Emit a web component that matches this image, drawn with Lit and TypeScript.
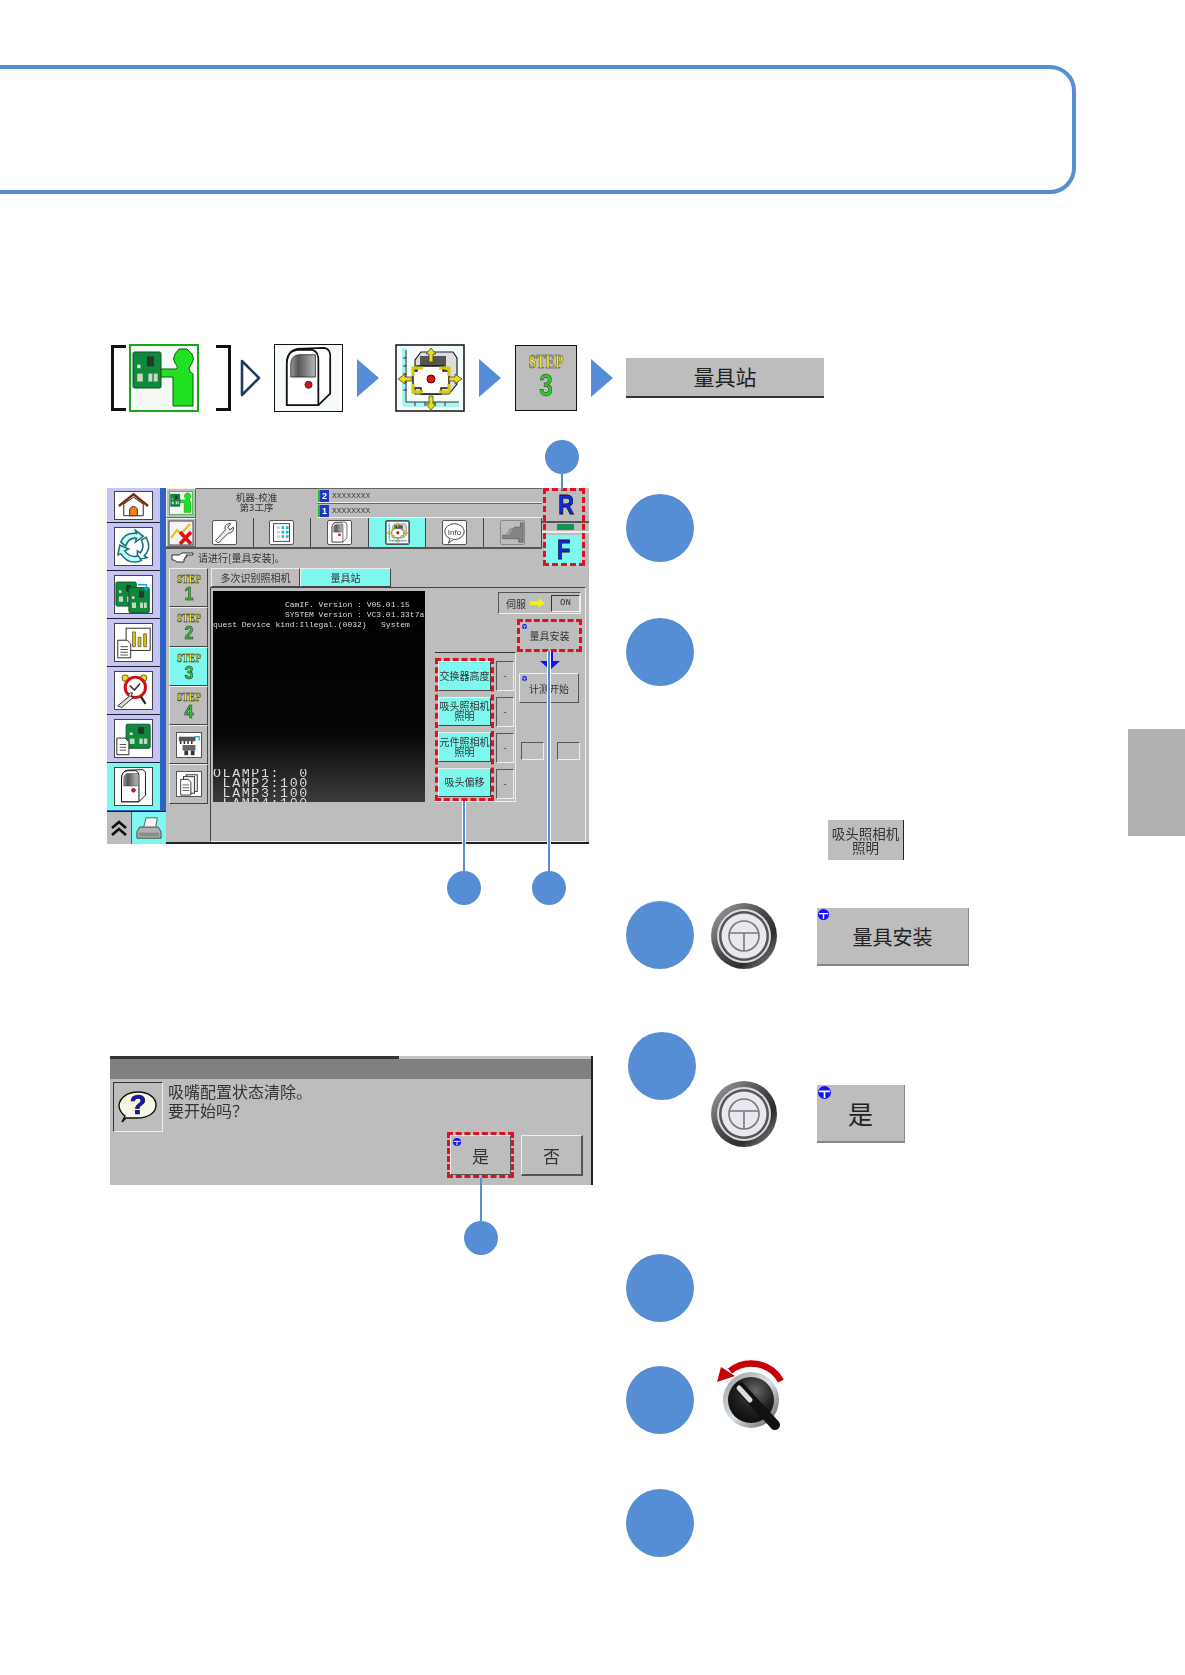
import { LitElement, html, css, svg } from "lit";
import { customElement } from "lit/decorators.js";

const pcb = (x: number, y: number, w: number, h: number) => svg`
  <rect x=${x} y=${y} width=${w} height=${h} rx="1.5" fill="#0f8a3c" stroke="#14502c" stroke-width="1"/>
  <rect x=${x + w * 0.5} y=${y + h * 0.12} width=${w * 0.25} height=${h * 0.28} fill="#26382e"/>
  <rect x=${x + w * 0.15} y=${y + h * 0.6} width=${w * 0.2} height=${h * 0.22} fill="#c8d8c8"/>
  <rect x=${x + w * 0.55} y=${y + h * 0.6} width=${w * 0.14} height=${h * 0.22} fill="#c8d8c8"/>
  <rect x=${x + w * 0.74} y=${y + h * 0.6} width=${w * 0.14} height=${h * 0.22} fill="#c8d8c8"/>
  <rect x=${x + w * 0.15} y=${y + h * 0.35} width=${w * 0.12} height=${h * 0.1} fill="#dfe8df"/>`;

const personPcb = () => html`<svg viewBox="0 0 70 68" width="100%" height="100%">
  <rect x="1" y="1" width="68" height="66" fill="#f6faf6" stroke="#1aa51a" stroke-width="2"/>
  ${pcb(4, 8, 28, 36)}
  <path d="M32 25H47Q50 24 46 19Q43 15 46 10L50 5H58L63 10Q66 15 63 19L60 24Q60 28 64 30V62H44V33H32Z" fill="#22e022" stroke="#0c5c0c" stroke-width="1"/>
</svg>`;

const machine = () => html`<svg viewBox="0 0 68 68" width="100%" height="100%" preserveAspectRatio="none">
  <defs><linearGradient id="win" x1="0" y1="0" x2="1" y2="0"><stop offset="0" stop-color="#9a9a9a"/><stop offset=".3" stop-color="#555"/><stop offset="1" stop-color="#b8b8b8"/></linearGradient></defs>
  <path d="M12 62V20Q12 6 23 4L50 3Q57 4 56 14V50L44 62Z" fill="#fff" stroke="#111" stroke-width="1.8"/>
  <path d="M12 62V20Q12 6 23 5H38Q45 7 44 18V62Z" fill="#fff" stroke="#111" stroke-width="1.8"/>
  <path d="M16 33V20Q16 11 24 10H41V33Z" fill="url(#win)" stroke="#222" stroke-width=".8"/>
  <circle cx="34" cy="41" r="3.6" fill="#e01010" stroke="#333"/>
</svg>`;

const station = () => html`<svg viewBox="0 0 70 68" width="100%" height="100%">
  <rect x="1" y="1" width="68" height="66" fill="#f4fbfb" stroke="#111" stroke-width="1.5"/>
  <rect x="7" y="4" width="4" height="56" fill="#a8f4f4"/><rect x="8" y="58" width="56" height="5" fill="#a8f4f4"/>
  <path d="M11 6V58H64" fill="none" stroke="#333"/>
  <path d="M8 14h4M8 22h4M8 30h4M8 38h4M8 46h4M20 58v4M30 58v4M40 58v4M50 58v4" stroke="#333"/>
  <path d="M20 50V16L26 8H58L62 14V40L54 50Z" fill="#ddd" stroke="#222" stroke-width="1.2"/>
  <rect x="25" y="12" width="26" height="14" fill="#555"/>
  <path d="M22 22H48V27H54V44H46V50H26V44H18V27H22Z" fill="#fff" stroke="#111" stroke-width="1.4"/>
  <path d="M18 32V24H28M44 24H54V32M18 40V48H28M44 48H54V40" fill="none" stroke="#d8c800" stroke-width="3"/>
  <circle cx="36" cy="35" r="4" fill="#e01010" stroke="#500"/>
  <path d="M36 4L31 10H34V18H38V10H41ZM36 66L31 60H34V52H38V60H41ZM3 35L10 30V33H17V37H10V40ZM67 35L60 30V33H54V37H60V40Z" fill="#ecdc10" stroke="#333" stroke-width=".7"/>
</svg>`;

const step = (n: string) => html`<svg viewBox="0 0 36 39" width="36" height="39">
  <text x="18" y="15" text-anchor="middle" textLength="24" lengthAdjust="spacingAndGlyphs" class="st">STEP</text>
  <text x="18" y="32" text-anchor="middle" textLength="9" lengthAdjust="spacingAndGlyphs" class="sn">${n}</text>
</svg>`;

const bigStep = () => html`<svg viewBox="0 0 62 66" width="100%" height="100%">
  <text x="31" y="23" text-anchor="middle" textLength="36" lengthAdjust="spacingAndGlyphs" class="st big">STEP</text>
  <text x="31" y="52" text-anchor="middle" textLength="14" lengthAdjust="spacingAndGlyphs" class="sn big">3</text>
</svg>`;

const home = () => html`<svg viewBox="0 0 38 28" width="38" height="28">
  <path d="M4 15L19 3L34 15" fill="none" stroke="#7a2a10" stroke-width="2.4"/>
  <path d="M9 13V25H29V13L19 6Z" fill="#fff" stroke="#222"/>
  <path d="M15 25V18Q19 13 23 18V25Z" fill="#f08020" stroke="#622"/>
</svg>`;
const cycle = () => html`<svg viewBox="0 0 38 38" width="38" height="38" fill="#fff" stroke="#1f6f78" stroke-width="1.6">
  <path d="M6 14Q10 4 22 5L21 2L29 8L21 14L22 10Q14 9 11 18Z" fill="#bff"/>
  <path d="M32 9Q38 20 30 28L33 30L23 32V23L26 25Q31 19 27 12Z" fill="#fff"/>
  <path d="M27 33Q14 38 6 26L3 27L5 17L14 21L10 23Q16 31 24 28Z" fill="#bff"/>
</svg>`;
const pcbs = () => html`<svg viewBox="0 0 40 40" width="38" height="38">
  ${pcb(1, 6, 22, 26)}${pcb(15, 12, 22, 27)}
  <path d="M25 9H34V13" fill="none" stroke="#20a0e0" stroke-width="1.6"/><path d="M31 12H37L34 16Z" fill="#20a0e0"/>
</svg>`;
const chart = () => html`<svg viewBox="0 0 40 40" width="38" height="38">
  <rect x="12" y="4" width="26" height="24" fill="#fff" stroke="#222"/>
  <path d="M19 24V8h3V24ZM25 24V14h3V24ZM31 24V10h3V24Z" fill="#e8c800" stroke="#333" stroke-width=".7"/>
  <path d="M3 17H13L17 21V36H3Z" fill="#fff" stroke="#222"/><path d="M6 24H14M6 27H14M6 30H14M6 33H14" stroke="#444"/>
</svg>`;
const alarm = () => html`<svg viewBox="0 0 40 40" width="38" height="38">
  <circle cx="11" cy="6" r="3.5" fill="#ecdc10" stroke="#555"/><circle cx="31" cy="6" r="3.5" fill="#ecdc10" stroke="#555"/>
  <circle cx="22" cy="16" r="11" fill="#fff" stroke="#d01018" stroke-width="3.2"/>
  <path d="M16 14L21 19L27 12" fill="none" stroke="#333" stroke-width="1.6"/>
  <path d="M3 36L15 26Q14 21 19 22L17 26L20 27L15 31L7 38Z" fill="#ddd" stroke="#222"/>
  <path d="M28 26L33 34" stroke="#222" stroke-width="2.4"/>
</svg>`;
const docPcb = () => html`<svg viewBox="0 0 40 40" width="38" height="38">
  ${pcb(12, 4, 26, 26)}
  <path d="M2 19H11L15 23V37H2Z" fill="#fff" stroke="#222"/><path d="M5 26H12M5 29H12M5 32H12" stroke="#444"/>
</svg>`;
const printer = () => html`<svg viewBox="0 0 32 28" width="30" height="26">
  <path d="M13 3H25L23 14H10Z" fill="#f4f4f4" stroke="#555"/>
  <path d="M6 13H26L29 18V25H3V18Z" fill="#b0b0b0" stroke="#444"/><rect x="5" y="19" width="22" height="4" fill="#8a8a8a"/>
</svg>`;
const wrench = () => html`<svg viewBox="0 0 26 26" width="100%" height="100%">
  <path d="M3 22L14 10Q12 4 18 3L20 3L17 7L19 10L23 7Q24 13 17 14L6 25Z" fill="#eee" stroke="#333"/>
</svg>`;
const gridIcon = () => html`<svg viewBox="0 0 26 26" width="100%" height="100%">
  <rect x="4" y="3" width="18" height="20" fill="#fff" stroke="#333"/>
  <path d="M8 6h3v3H8zM8 11h3v3H8zM8 16h3v3H8z" fill="#ccc"/><path d="M13 6h3v3h-3zM13 11h3v3h-3zM13 16h3v3h-3zM18 6h3v3h-3zM18 11h3v3h-3zM18 16h3v3h-3z" fill="#12b8c8"/>
</svg>`;
const info = () => html`<svg viewBox="0 0 26 26" width="100%" height="100%">
  <ellipse cx="13" cy="12" rx="11" ry="9" fill="#fff" stroke="#333"/><path d="M8 20L6 25L12 21" fill="#fff" stroke="#333"/>
  <text x="13" y="15.5" text-anchor="middle" class="info">Info</text>
</svg>`;
const disabled = () => html`<svg viewBox="0 0 26 26" width="100%" height="100%">
  <path d="M2 20V16H10L15 7H22V2H25V24H20V20Z" fill="#848484" stroke="#666"/><path d="M5 16L10 8H14L10 16Z" fill="#9a9a9a"/>
</svg>`;
const redX = () => html`<svg viewBox="0 0 26 26" width="26" height="26">
  <rect x="1" y="1" width="24" height="24" fill="#f4f4f4" stroke="#444"/>
  <path d="M3 18L9 10L13 14L22 4" fill="none" stroke="#e0c010" stroke-width="2"/>
  <path d="M12 12L23 24M23 12L12 24" stroke="#e01010" stroke-width="3.6"/>
</svg>`;
const hand = () => html`<svg viewBox="0 0 24 12" width="24" height="12">
  <path d="M1 3H8L11 1H22V3H15L16 5H14V7H13V10H6L3 8H1Z" fill="#fff" stroke="#222" stroke-width=".9"/>
</svg>`;
const feeder = () => html`<svg viewBox="0 0 26 26" width="100%" height="100%">
  <rect x="2" y="4" width="18" height="5" fill="#555"/><path d="M4 9v3M8 9v3M12 9v3M16 9v3" stroke="#222" stroke-width="1.6"/>
  <rect x="6" y="13" width="14" height="6" fill="#666"/><rect x="8" y="19" width="4" height="5" fill="#333"/><rect x="15" y="19" width="4" height="5" fill="#333"/>
  <path d="M19 4H24V8" fill="none" stroke="#20a0e0" stroke-width="1.4"/>
</svg>`;
const docs = () => html`<svg viewBox="0 0 26 26" width="100%" height="100%">
  <rect x="10" y="3" width="12" height="18" fill="#eee" stroke="#333"/><rect x="7" y="5" width="12" height="18" fill="#eee" stroke="#333"/>
  <path d="M4 8H12L15 11V25H4Z" fill="#fff" stroke="#333"/><path d="M6 14H13M6 17H13M6 20H13" stroke="#555"/>
</svg>`;
const ask = () => html`<svg viewBox="0 0 40 34" width="40" height="34">
  <path d="M20 2C31 2 38 8 38 15C38 23 30 28 19 28L8 28L4 32L7 26C3 23 1 19 1 15C2 8 9 2 20 2Z" fill="#f7f7e8" stroke="#111" stroke-width="1.4"/>
  <text x="20" y="24" text-anchor="middle" class="q">?</text>
</svg>`;
const badge = () => html`<svg class="badge" viewBox="0 0 12 12">
  <circle cx="6" cy="6" r="6" fill="#1414f0"/><path d="M1 5H11M6 5V11" stroke="#fff" stroke-width="1.5"/>
</svg>`;
const startKey = () => html`<svg viewBox="0 0 66 66" width="66" height="66">
  <defs><linearGradient id="m" x1="0" y1="0" x2="1" y2="1"><stop offset="0" stop-color="#a8a8a8"/><stop offset=".45" stop-color="#4c4c4c"/><stop offset=".7" stop-color="#2c2c2c"/><stop offset="1" stop-color="#9a9a9a"/></linearGradient></defs>
  <circle cx="33" cy="33" r="33" fill="url(#m)"/><circle cx="33" cy="33" r="27" fill="#dcdce4"/>
  <circle cx="33" cy="33" r="25" fill="#555"/><circle cx="33" cy="33" r="22.5" fill="#e8e8f0"/>
  <circle cx="33" cy="33" r="15" fill="none" stroke="#777" stroke-width="1.6"/><path d="M18 30H48M33 30V48" stroke="#777" stroke-width="1.6"/>
</svg>`;
const knob = () => html`<svg viewBox="0 0 80 84" width="80" height="84">
  <defs>
    <linearGradient id="k" x1="0" y1="0" x2="1" y2="1"><stop offset="0" stop-color="#999"/><stop offset=".5" stop-color="#d8e0e8"/><stop offset="1" stop-color="#555"/></linearGradient>
    <radialGradient id="b" cx=".6" cy=".3" r=".8"><stop offset="0" stop-color="#666"/><stop offset=".5" stop-color="#222"/><stop offset="1" stop-color="#080808"/></radialGradient>
  </defs>
  <path d="M71 28A34 34 0 0 0 20 18" fill="none" stroke="#c80008" stroke-width="6.5"/>
  <path d="M7 29L11 14L25 23Z" fill="#c80008"/>
  <circle cx="41" cy="47" r="28" fill="url(#k)"/><circle cx="41" cy="47" r="23" fill="url(#b)"/>
  <path d="M30 34L65 72" stroke="#111" stroke-width="10" stroke-linecap="round"/>
  <path d="M29 35L40 47" stroke="#ddd" stroke-width="5" stroke-linecap="round"/>
</svg>`;
const tri = (hollow = false) => html`<svg class="tri ${hollow ? "first" : ""}" viewBox="0 0 22 38" width="22" height="38">
  ${hollow
    ? svg`<path d="M2 2L19 19L2 36Z" fill="#fff" stroke="#1f3a66" stroke-width="2.6" stroke-linejoin="round"/>`
    : svg`<path d="M0 0L22 19L0 38Z" fill="#558ed5"/>`}
</svg>`;

const navItems = [home(), cycle(), pcbs(), chart(), alarm(), docPcb(), machine()];

@customElement("app-root")
export class AppRoot extends LitElement {
  static styles = css`
    :host { display: block; position: relative; width: 1185px; height: 1675px; overflow: hidden; background: #fff;
      font-family: "Noto Sans CJK SC", "Liberation Sans", sans-serif; color: #2a2a2a; }
    svg { display: block; }
    .banner { box-sizing: border-box; margin: 65px 0 0 -24px; width: 1100px; height: 129px; border: 4px solid #558ed5; border-radius: 26px; }

    .crumbs { display: flex; align-items: center; height: 69px; margin-top: 149px; padding-left: 111px; }
    .br { box-sizing: border-box; width: 15px; height: 66px; border: 3px solid #111; border-right: 0; }
    .br.r { border: 3px solid #111; border-left: 0; margin-left: 17px; }
    .ci { width: 70px; height: 68px; margin-left: 3px; flex: none; filter: blur(.4px); }
    .ci.m { margin-left: 12px; width: 69px; box-sizing: border-box; border: 1px solid #111; background: #f6fbf8; }
    .ci.s { margin-left: 16px; }
    .ci.st3 { margin-left: 14px; width: 62px; height: 66px; box-sizing: border-box; border: 1px solid #111; background: #bdbdbd; }
    .tri { margin-left: 14px; flex: none; }
    .tri.first { margin-left: 9px; }
    .crumbbtn { margin-left: 13px; width: 198px; height: 40px; box-sizing: border-box; background: #bdbdbd; border-bottom: 2px solid #333; font-size: 21px; line-height: 37px; text-align: center; color: #222; }

    .st { font: bold 12px "Liberation Serif", serif; fill: #f4ec10; stroke: #333; stroke-width: .5px; }
    .sn { font: bold 19px "Liberation Sans", sans-serif; fill: #30c830; stroke: #222; stroke-width: .5px; }
    .st.big { font-size: 19px; }
    .sn.big { font-size: 33px; }
    .info { font: 9px "Liberation Sans", sans-serif; fill: #333; }
    .q { font: bold 27px "Liberation Sans", sans-serif; fill: #1414e0; stroke: #000; stroke-width: .7px; }

    .main { display: grid; grid-template-columns: 519px 502px 57px; margin-top: 28px; padding-left: 107px; }
    .left { position: relative; }
    .overlay { position: absolute; left: 0; top: 0; z-index: 5; }

    /* Machine screen */
    .screen { margin-top: 48px; width: 482px; height: 356px; display: grid; grid-template-columns: 59px 423px; background: #bdbdbd; border-bottom: 2px solid #222; box-sizing: border-box; font-size: 10px; line-height: 11px; color: #333; filter: blur(.35px); }
    .nav { display: flex; flex-direction: column; border-right: 6px solid #2f62c4; background: #c6c6f6; position: relative; }
    .nv { height: 48px; box-sizing: border-box; display: flex; align-items: center; justify-content: center; border-bottom: 1px solid #222; flex: none; }
    .nv:first-child { height: 35px; }
    .nv.on { background: #7ef7ef; border-bottom: 1px solid #2f62c4; }
    .ib { box-sizing: border-box; width: 39px; background: #fff; border: 1px solid #444; display: flex; align-items: center; justify-content: center; height: 39px; }
    .nv:first-child .ib { height: 29px; }
    .navb { display: flex; height: 33px; margin-right: -6px; background: #bdbdbd; border-top: 1px solid #222; box-sizing: border-box; flex: none; }
    .up { width: 24px; display: flex; align-items: center; justify-content: center; border-right: 1px solid #555; }
    .pr { flex: 1; background: #7ef7ef; display: flex; align-items: center; justify-content: center; }

    .rt { display: flex; flex-direction: column; }
    .top { display: flex; height: 80px; }
    .topl { width: 376px; }
    .ra { display: flex; height: 30px; }
    .sq { box-sizing: border-box; width: 30px; flex: none; border: 1px solid #888; border-color: #eee #666 #666 #eee; display: flex; align-items: center; justify-content: center; }
    .sqi { width: 24px; height: 24px; }
    .title { width: 121px; box-sizing: border-box; border-top: 1px solid #555; text-align: center; padding-top: 3px; line-height: 10px; font-size: 9.5px; }
    .lines { flex: 1; display: flex; flex-direction: column; }
    .ln { display: flex; align-items: center; height: 15px; border-top: 1px solid #666; border-bottom: 1px solid #eee; box-sizing: border-box; font: 8px "Liberation Mono", monospace; color: #444; }
    .ln b { display: inline-block; width: 11px; height: 12px; background: #1c38c0; border-left: 2px solid #20c020; color: #fff; font: bold 9px/12px "Liberation Sans", sans-serif; text-align: center; margin: 0 3px 0 1px; box-sizing: border-box; }
    .rb { display: flex; height: 31px; border-bottom: 2px solid #555; box-sizing: border-box; }
    .tb { box-sizing: border-box; width: 57.6px; display: flex; align-items: center; justify-content: center; border-right: 1px solid #444; flex: none; }
    .tb.on { background: #7ef7ef; }
    .tb i { display: block; width: 25px; height: 25px; background: #fff; border: 1px solid #555; border-radius: 2px; box-sizing: border-box; }
    .tb i.off { background: #bdbdbd; border-color: #888; }
    .hint { display: flex; align-items: center; gap: 3px; height: 17px; padding-left: 5px; font-size: 10px; }

    .rf { width: 47px; box-sizing: border-box; position: relative; }
    .rfb { position: absolute; left: 1px; top: 0; z-index: 2; box-sizing: border-box; width: 42px; height: 78px; border: 3px dashed #e01020; }
    .rfcol { display: flex; flex-direction: column; }
    .letter { height: 33px; display: flex; align-items: center; justify-content: center; padding-left: 1px; color: #1028e8; }
    .letter span { display: block; font: bold 28px/1 "Liberation Sans", sans-serif; -webkit-text-stroke: .8px #111; transform: scaleX(.78); }
    .strip { height: 12px; border-top: 2px solid #555; border-bottom: 2px solid #eee; box-sizing: border-box; display: flex; justify-content: center; align-items: center; }
    .strip span { display: block; width: 17px; height: 6px; background: #18905a; }
    .letter.f { background: #7ef7ef; margin: 2px 7px 0 3px; height: 30px; padding-left: 0; }

    .low { display: flex; flex: 1; }
    .steps { width: 39px; margin-left: 3px; flex: none; display: flex; flex-direction: column; }
    .sp { height: 39.3px; box-sizing: border-box; border: 1px solid; border-color: #eee #444 #444 #eee; display: flex; align-items: center; justify-content: center; flex: none; }
    .sp.on { background: #7ef7ef; }
    .sp i { display: block; width: 26px; height: 26px; background: #fff; border: 1px solid #555; box-sizing: border-box; }
    .panel { flex: 1; margin-left: 2px; display: flex; flex-direction: column; min-width: 0; }
    .tabs { display: flex; height: 19px; padding-left: 1px; }
    .tab { box-sizing: border-box; width: 89px; text-align: center; line-height: 18px; border: 1px solid; border-color: #eee #444 #444 #eee; font-size: 10px; }
    .tab.on { width: 91px; background: #7ef7ef; }
    .body { flex: 1; display: flex; border-top: 1px solid #444; border-left: 1px solid #444; border-right: 1px solid #eee; border-bottom: 1px solid #eee; padding: 3px 0 0 2px; margin-right: 3px; margin-bottom: 2px; box-sizing: border-box; }
    .cam { width: 212px; height: 211px; flex: none; background: linear-gradient(#000 0, #060606 68%, #3c3c3c 100%); color: #ddd; font-family: "Liberation Mono", monospace; overflow: hidden; display: flex; flex-direction: column; padding-top: 9px; box-sizing: border-box; white-space: pre; }
    .cam div { font-size: 8px; line-height: 10px; }
    .cam .lamp { margin-top: auto; font-size: 13.3px; letter-spacing: 1.6px; line-height: 10px; height: 33px; overflow: hidden; }
    .ctl { flex: 1; min-width: 0; display: flex; flex-direction: column; }
    .servo { margin: 1px 0 0 73px; width: 83px; height: 22px; box-sizing: border-box; border: 1px solid; border-color: #555 #eee #eee #555; display: flex; align-items: center; padding-left: 7px; gap: 4px; }
    .servo > span { flex: none; white-space: nowrap; }
    .on-box { width: 29px; height: 17px; border: 1px solid; border-color: #333 #eee #eee #333; box-sizing: border-box; font: 9px/15px "Liberation Mono", monospace; text-align: center; margin-left: 2px; flex: none; }
    .hl { box-sizing: border-box; border: 3px dashed #e01020; }
    .inst { margin: 5px 0 0 92px; width: 65px; height: 33px; }
    .bt { position: relative; display: flex; align-items: center; justify-content: center; background: #bdbdbd; text-align: center; box-sizing: border-box; border: 1px solid; border-color: #eee #555 #555 #eee; }
    .inst .bt { height: 100%; border: 0; }
    .badge { position: absolute; left: 2px; top: 2px; width: 5px; height: 5px; }
    .split { display: flex; }
    .cluster { width: 81px; margin-left: 10px; flex: none; height: 150px; border-top: 1px solid #333; border-right: 1px solid #eee; border-bottom: 1px solid #eee; box-sizing: border-box; padding-top: 5px; display: flex; gap: 2px; }
    .cbox { width: 59px; height: 143px; display: flex; flex-direction: column; gap: 6px; flex: none; }
    .cy { background: #7ef7ef; height: 29.5px; line-height: 10px; font-size: 10px; flex: none; border-color: #eee #444 #444 #eee; }
    .dashes { padding-top: 3px; display: flex; flex-direction: column; gap: 6px; width: 18px; }
    .dashes span { height: 30px; box-sizing: border-box; border: 1px solid; border-color: #555 #eee #eee #555; text-align: center; line-height: 26px; }
    .measure { flex: 1; padding-left: 3px; display: flex; flex-direction: column; }
    .arrow { height: 21px; padding-left: 21px; }
    .mbtn { width: 60px; height: 30px; font-size: 10px; }
    .pair { display: flex; gap: 13px; margin-top: 39px; padding-left: 2px; }
    .pair span { display: block; width: 23px; height: 18px; box-sizing: border-box; border: 1px solid; border-color: #555 #eee #eee #555; }

    /* Dialog */
    .dlg { margin: 212px 0 0 3px; width: 483px; height: 129px; background: #bdbdbd; border-right: 2px solid #222; box-sizing: border-box; display: flex; flex-direction: column; color: #333; filter: blur(.3px); }
    .dl { height: 3px; background: linear-gradient(90deg, #333 60%, #c4c4c4 60%); flex: none; }
    .dt { height: 20px; background: #808080; flex: none; }
    .db { flex: 1; position: relative; display: flex; padding: 3px 0 0 3px; }
    .qb { width: 50px; height: 50px; box-sizing: border-box; border: 1px solid; border-color: #333 #eee #eee #333; display: flex; align-items: center; justify-content: center; flex: none; }
    .dm { font-size: 16px; line-height: 19px; margin: 0 0 0 5px; }
    .dba { margin-left: auto; display: flex; align-items: flex-start; gap: 7px; padding: 50px 8px 0 0; }
    .dyes { width: 67px; height: 46px; }
    .dyes .bt, .dno { font-size: 17px; }
    .dyes .bt { height: 100%; }
    .dyes .badge { width: 8px; height: 8px; }
    .dno { width: 62px; height: 41px; margin-top: 3px; border-width: 1px 2px 2px 1px; }

    /* Steps */
    .steplist { display: flex; flex-direction: column; padding: 54px 0 0 0; }
    .row { display: flex; flex: none; }
    .n { width: 68px; height: 68px; border-radius: 50%; background: #558ed5; flex: none; }
    .h1 { height: 124px; } .h2 { height: 283px; } .h3 { height: 131px; } .h4 { height: 222px; } .h5 { height: 112px; } .h6 { height: 123px; }
    .shift { margin-left: 2px; }
    .smallb { margin: 202px 0 0 134px; width: 76px; height: 40px; box-sizing: border-box; background: #bdbdbd; border-right: 1px solid #222; font-size: 13.5px; line-height: 14px; text-align: center; display: flex; align-items: center; justify-content: center; color: #333; filter: blur(.3px); }
    .key { margin: 2px 0 0 17px; flex: none; }
    .key.lo { margin: 49px 0 0 15px; }
    .big { position: relative; box-sizing: border-box; background: #bdbdbd; display: flex; align-items: center; justify-content: center; border-right: 1px solid #888; border-bottom: 2px solid #888; color: #222; }
    .big .badge { left: 1px; top: 1px; width: 11px; height: 11px; }
    .b1 { margin: 7px 0 0 40px; width: 152px; height: 58px; font-size: 20px; }
    .b2 { margin: 53px 0 0 40px; width: 88px; height: 58px; font-size: 25px; }
    .b2 .badge { width: 13px; height: 13px; }
    .knob { margin: -13px 0 0 16px; flex: none; }

    .tabgrey { margin-top: 289px; width: 57px; height: 107px; background: #b1b1b1; }
  `;

  render() {
    const steps = ["1", "2", "3", "4"];
    return html`
      <div class="banner"></div>

      <div class="crumbs">
        <div class="br"></div>
        <div class="ci">${personPcb()}</div>
        <div class="br r"></div>
        ${tri(true)}
        <div class="ci m">${machine()}</div>
        ${tri()}
        <div class="ci s">${station()}</div>
        ${tri()}
        <div class="ci st3">${bigStep()}</div>
        ${tri()}
        <div class="crumbbtn">量具站</div>
      </div>

      <div class="main">
        <div class="left">
          <div class="screen">
            <div class="nav">
              ${navItems.map((ic, i) => html`<div class="nv ${i === 6 ? "on" : ""}"><div class="ib">${ic}</div></div>`)}
              <div class="navb">
                <div class="up"><svg viewBox="0 0 20 20" width="20" height="20"><path d="M3 10L10 4L17 10M3 17L10 11L17 17" fill="none" stroke="#111" stroke-width="2.6"/></svg></div>
                <div class="pr">${printer()}</div>
              </div>
            </div>
            <div class="rt">
              <div class="top">
                <div class="topl">
                  <div class="ra">
                    <div class="sq"><div class="sqi">${personPcb()}</div></div>
                    <div class="title">机器-校准<br />第3工序</div>
                    <div class="lines">
                      <div class="ln"><b>2</b>XXXXXXXX</div>
                      <div class="ln"><b>1</b>XXXXXXXX</div>
                    </div>
                  </div>
                  <div class="rb">
                    <div class="sq">${redX()}</div>
                    <div class="tb"><i>${wrench()}</i></div>
                    <div class="tb"><i>${gridIcon()}</i></div>
                    <div class="tb"><i>${machine()}</i></div>
                    <div class="tb on"><i>${station()}</i></div>
                    <div class="tb"><i>${info()}</i></div>
                    <div class="tb"><i class="off">${disabled()}</i></div>
                  </div>
                  <div class="hint">${hand()}<span>请进行[量具安装]。</span></div>
                </div>
                <div class="rf">
                  <div class="rfb"></div>
                  <div class="rfcol">
                    <div class="letter"><span>R</span></div>
                    <div class="strip"><span></span></div>
                    <div class="letter f"><span>F</span></div>
                  </div>
                </div>
              </div>
              <div class="low">
                <div class="steps">
                  ${steps.map((s) => html`<div class="sp ${s === "3" ? "on" : ""}">${step(s)}</div>`)}
                  <div class="sp"><i>${feeder()}</i></div>
                  <div class="sp"><i>${docs()}</i></div>
                </div>
                <div class="panel">
                  <div class="tabs">
                    <div class="tab">多次识别照相机</div>
                    <div class="tab on">量具站</div>
                  </div>
                  <div class="body">
                    <div class="cam">
                      <div>               CamIF. Version : V05.01.15</div>
                      <div>               SYSTEM Version : VC3.01.33t7a</div>
                      <div>quest Device kind:Illegal.(0032)   System</div>
                      <div class="lamp">OLAMP1:  0
 LAMP2:100
 LAMP3:100
 LAMP4:100</div>
                    </div>
                    <div class="ctl">
                      <div class="servo"><span>伺服</span>
                        <svg viewBox="0 0 16 10" width="16" height="10"><path d="M0 3H9V0L16 5L9 10V7H0Z" fill="#f4f010"/></svg>
                        <div class="on-box">ON</div>
                      </div>
                      <div class="hl inst"><div class="bt">${badge()}量具安装</div></div>
                      <div class="split">
                        <div class="cluster">
                          <div class="hl cbox">
                            <div class="bt cy">交换器高度</div>
                            <div class="bt cy">吸头照相机<br />照明</div>
                            <div class="bt cy">元件照相机<br />照明</div>
                            <div class="bt cy">吸头偏移</div>
                          </div>
                          <div class="dashes"><span>-</span><span>-</span><span>-</span><span>-</span></div>
                        </div>
                        <div class="measure">
                          <div class="arrow"><svg viewBox="0 0 20 18" width="20" height="18"><path d="M7 0H13V9H20L10 18L0 9H7Z" fill="#1010f0"/></svg></div>
                          <div class="bt mbtn">${badge()}计测开始</div>
                          <div class="pair"><span></span><span></span></div>
                        </div>
                      </div>
                    </div>
                  </div>
                </div>
              </div>
            </div>
          </div>

          <div class="dlg">
            <div class="dl"></div>
            <div class="dt"></div>
            <div class="db">
              <div class="qb">${ask()}</div>
              <div class="dm">吸嘴配置状态清除。<br />要开始吗？</div>
              <div class="dba">
                <div class="hl dyes"><div class="bt">${badge()}是</div></div>
                <div class="bt dno">否</div>
              </div>
            </div>
          </div>

          <svg class="overlay" width="519" height="820" viewBox="0 0 519 820">
            <g fill="none" stroke="#fff" stroke-width="4">
              <path d="M357 361V448M442 211V448"/>
            </g>
            <g fill="none" stroke="#558ed5" stroke-width="2">
              <path d="M455 17V50M357 361V448M442 211V448M374 738V798"/>
            </g>
            <g fill="#558ed5">
              <circle cx="455" cy="17" r="17"/><circle cx="357" cy="448" r="17"/>
              <circle cx="442" cy="448" r="17"/><circle cx="374" cy="798" r="17"/>
            </g>
          </svg>
        </div>

        <div class="steplist">
          <div class="row h1"><div class="n"></div></div>
          <div class="row h2"><div class="n"></div><div class="smallb"><span>吸头照相机<br />照明</span></div></div>
          <div class="row h3"><div class="n"></div><div class="key">${startKey()}</div><div class="big b1">${badge()}量具安装</div></div>
          <div class="row h4"><div class="n shift"></div><div class="key lo">${startKey()}</div><div class="big b2">${badge()}是</div></div>
          <div class="row h5"><div class="n"></div></div>
          <div class="row h6"><div class="n"></div><div class="knob">${knob()}</div></div>
          <div class="row"><div class="n"></div></div>
        </div>

        <div class="tabgrey"></div>
      </div>
    `;
  }
}
